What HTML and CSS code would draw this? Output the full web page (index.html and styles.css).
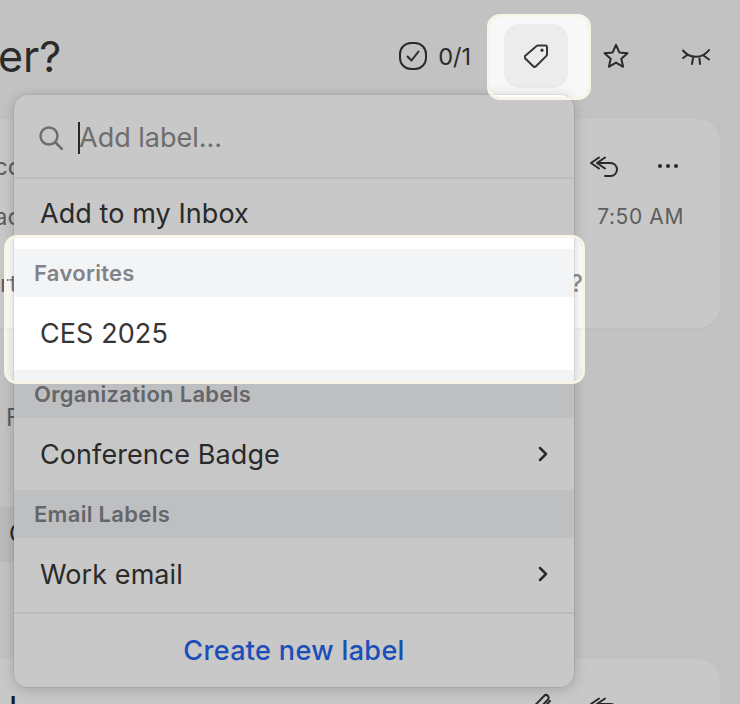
FILE: index.html
```html
<!DOCTYPE html>
<html lang="en">
<head>
<meta charset="utf-8">
<title>Labels</title>
<link rel="stylesheet" href="styles.css">
</head>
<body>
<div class="page">
  <header class="topbar">
    <h1 class="title">er?</h1>
    <div class="actions">
      <div class="progress">
        <svg class="ic28" viewBox="0 0 28 28"><rect x="1" y="1" width="26" height="26" rx="11" /><path d="M8.5 14.5l4 4 7-9" /></svg>
        <span>0/1</span>
      </div>
      <div class="tagbtn">
        <svg class="ic24" viewBox="0 0 24 24"><path d="M14 1.5h7.5A1.5 1.5 0 0 1 23 3v7.5a2 2 0 0 1-.6 1.4L12 22.2a2 2 0 0 1-2.8 0l-7.9-7.7a2 2 0 0 1 0-2.8L12.6 2.1A2 2 0 0 1 14 1.5z"/><circle class="fill" cx="18" cy="6.2" r="1.6"/></svg>
      </div>
      <svg class="star" viewBox="0 0 26 26"><path d="M13 1.8l3.3 7.6 8.2.8-6.2 5.5 1.8 8.1-7.1-4.2-7.1 4.2 1.8-8.1-6.2-5.5 8.2-.8z"/></svg>
      <svg class="eye" viewBox="0 0 28 16"><path d="M1 1.500C8 10 20 10 27 1M1 9l5-3.500M27 10.500L21.500 6.500M10 15l1-5.500M18 15l-.5-5.500"/></svg>
    </div>
  </header>

  <section class="card">
    <div class="cardrow first">
      <span class="frag">co</span>
      <div class="cardicons">
        <svg class="reply" viewBox="0 0 28 21"><path d="M9 1.500L1 7l8 5.500M15 1.500L7 7l8 5.500M7 7h13.500a6.500 6.500 0 0 1 0 13H15"/></svg>
        <svg class="dots" viewBox="0 0 20 4"><circle class="fill" cx="2" cy="2" r="2"/><circle class="fill" cx="10" cy="2" r="2"/><circle class="fill" cx="18" cy="2" r="2"/></svg>
      </div>
    </div>
    <div class="cardrow second">
      <span class="frag">ac</span>
      <span class="time">7:50 AM</span>
    </div>
    <div class="cardrow third">
      <span class="frag inset">rt</span>
      <span class="ask">?</span>
    </div>
  </section>

  <div class="gapline"><span class="frag">F</span></div>
  <div class="chip"><span>C</span></div>

  <section class="card lower">
    <span class="frag dark">l</span>
    <div class="lowericons">
      <svg class="clip" viewBox="0 0 22 26"><path d="M20 8L9 20a4 4 0 0 1-6-5.500L14 3a2.600 2.600 0 0 1 4 3.500L8 17"/></svg>
      <svg class="reply low" viewBox="0 0 28 21"><path d="M9 1.500L1 7l8 5.500M15 1.500L7 7l8 5.500M7 7h13.500a6.500 6.500 0 0 1 0 13H15"/></svg>
    </div>
  </section>

  <div class="menu">
    <div class="search">
      <svg class="searchic" viewBox="0 0 24 24"><circle cx="10" cy="10" r="8.500"/><path d="M16.500 16.500L23 23"/></svg>
      <span class="caret"></span>
      <span class="placeholder">Add label...</span>
    </div>
    <div class="row first">Add to my Inbox</div>
    <div class="head">Favorites</div>
    <div class="row fav">CES 2025</div>
    <div class="head">Organization Labels</div>
    <div class="row">Conference Badge
      <svg class="chev" viewBox="0 0 10 16"><path d="M2 2l6 6-6 6"/></svg>
    </div>
    <div class="head">Email Labels</div>
    <div class="row last">Work email
      <svg class="chev" viewBox="0 0 10 16"><path d="M2 2l6 6-6 6"/></svg>
    </div>
    <div class="create">Create new label</div>
  </div>

  <div class="dim"></div>
  <div class="rim rim-tag"></div>
  <div class="rim rim-fav"></div>
</div>
</body>
</html>
```

FILE: styles.css
```css
* { box-sizing: border-box; }
html, body { margin: 0; padding: 0; }
body { width: 740px; height: 704px; overflow: hidden; background: #f8f8f8; font-family: Inter, "Liberation Sans", sans-serif; color: #363636; }
svg { display: block; fill: none; stroke: #363636; stroke-width: 2; stroke-linecap: round; stroke-linejoin: round; flex: none; }
svg .fill { fill: #363636; stroke: none; }

.page { position: relative; width: 740px; height: 704px; overflow: hidden; }

.topbar { height: 119px; display: flex; align-items: flex-start; justify-content: space-between; }
.title { margin: 31px 0 0 -2px; font-size: 43px; line-height: 50px; font-weight: 400; color: #363636; }
.actions { display: flex; align-items: center; height: 64px; margin-top: 24px; margin-right: 30px; }
.progress { display: flex; align-items: center; gap: 11px; font-size: 23.5px; margin-right: 33px; }
.ic28 { width: 28px; height: 28px; }
.tagbtn { width: 64px; height: 64px; border-radius: 15px; background: #ececec; display: flex; align-items: center; justify-content: center; margin-right: 35px; }
.ic24 { width: 24px; height: 24px; }
.star { width: 26px; height: 26px; margin-right: 53px; }
.eye { width: 28px; height: 16px; margin-top: 2px; }

.card { width: 740px; margin-left: -20px; height: 209px; background: #fff; border-radius: 22px; box-shadow: 0 1px 3px rgba(0,0,0,.04); padding: 0 36px 0 14px; display: flex; flex-direction: column; }
.cardrow { display: flex; justify-content: space-between; align-items: center; }
.cardrow.first { margin-top: 29px; height: 36px; }
.cardrow.second { margin-top: 12px; height: 40px; }
.cardrow.third { margin-top: 27px; height: 40px; }
.frag { font-size: 24px; color: #777; }
.frag.inset { margin-left: 6px; }
.cardicons { display: flex; align-items: center; gap: 40px; margin-right: 6px; }
.reply { width: 28px; height: 21px; }
.reply.low { margin-top: 4px; }
.dots { width: 20px; height: 4px; }
.time { font-size: 21px; letter-spacing: .6px; color: #787878; }
.ask { font-size: 24px; font-weight: 500; color: #8f8f8f; margin-right: 101px; }

.gapline { height: 179px; padding-top: 75px; margin-left: 6px; }
.chip { height: 55px; width: 14px; background: #eee; overflow: hidden; padding: 12px 0 0 9px; font-size: 24px; color: #333; }
.chip span { display: block; }

.card.lower { height: 120px; padding: 32px 36px 0 30px; flex-direction: row; justify-content: space-between; position: absolute; top: 659px; left: 0; }
.frag.dark { color: #222; font-weight: 600; }
.lowericons { display: flex; align-items: flex-start; gap: 38px; margin-right: 66px; margin-top: 2px; }
.clip { width: 22px; height: 26px; }

.menu { position: absolute; left: 14px; top: 95px; width: 560px; height: 592px; background: #fff; border-radius: 14px; box-shadow: 0 2px 14px rgba(0,0,0,.2), 0 0 0 1px rgba(0,0,0,.05); overflow: hidden; display: flex; flex-direction: column; }
.search { height: 84px; display: flex; align-items: center; padding: 3px 0 0 25px; border-bottom: 2px solid #f0f0f0; }
.searchic { width: 24px; height: 24px; stroke: #8d8d8d; stroke-width: 2.500; margin-right: 15px; }
.caret { width: 2px; height: 32px; background: #333; margin-right: -1px; }
.placeholder { font-size: 27px; color: #8c8c8c; }
.row { height: 72px; display: flex; align-items: center; justify-content: space-between; padding: 0 26px 0 26px; font-size: 27px; letter-spacing: .08px; color: #363636; background: #fff; }
.row.first { height: 70px; padding-bottom: 2px; }
.row.fav { height: 73px; }
.row.last { height: 74px; padding-bottom: 2px; }
.head { height: 48px; display: flex; align-items: center; padding-left: 20px; background: #f3f4f6; font-size: 22px; font-weight: 600; letter-spacing: .3px; color: #818388; }
.chev { width: 10px; height: 16px; stroke-width: 2.500; }
.create { flex: 1; display: flex; align-items: center; justify-content: center; border-top: 2px solid #f0f0f0; font-size: 27px; font-weight: 500; letter-spacing: .35px; color: #2563eb; }

.dim { position: absolute; inset: 0; background: rgba(0,0,0,.215); clip-path: path(evenodd, "M0 0H740V704H0Z M500 16H578A10 10 0 0 1 588 26V88A10 10 0 0 1 578 98H500A10 10 0 0 1 490 88V26A10 10 0 0 1 500 16Z M16 238H572A10 10 0 0 1 582 248V371A10 10 0 0 1 572 381H16A10 10 0 0 1 6 371V248A10 10 0 0 1 16 238Z"); }
.rim { position: absolute; border: 3px solid #f8f4e7; border-radius: 13px; }
.rim-tag { left: 487px; top: 14px; width: 104px; height: 86px; }
.rim-fav { left: 4px; top: 235px; width: 581px; height: 149px; }
```
